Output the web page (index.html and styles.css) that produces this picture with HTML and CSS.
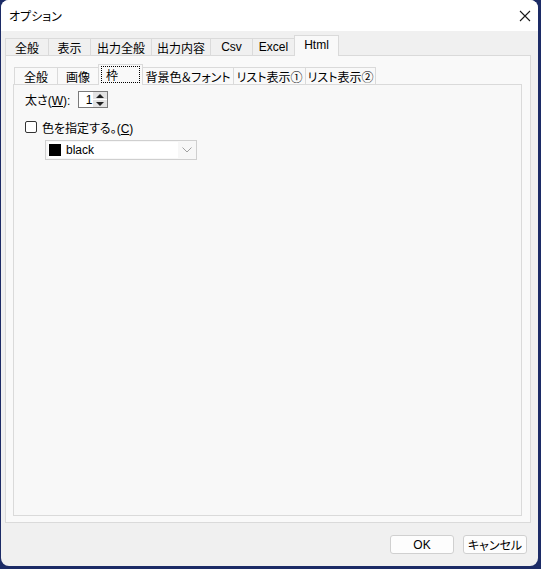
FILE: index.html
```html
<!DOCTYPE html>
<html lang="ja">
<head>
<meta charset="utf-8">
<title>オプション</title>
<link rel="stylesheet" href="styles.css">
</head>
<body>
<div class="window">
  <div class="titlebar">
    <span class="title">オプション</span>
    <svg class="close" width="12" height="12" viewBox="0 0 12 12"><path d="M1 1 L11 11 M11 1 L1 11" stroke="#1a1a1a" stroke-width="1.1" fill="none"/></svg>
  </div>
  <div class="content">
    <div class="tabs outer-tabs">
      <div class="tab w43">全般</div>
      <div class="tab w42">表示</div>
      <div class="tab w61">出力全般</div>
      <div class="tab w59">出力内容</div>
      <div class="tab w42">Csv</div>
      <div class="tab w42">Excel</div>
      <div class="tab active w44">Html</div>
    </div>
    <div class="panel outer-panel">
      <div class="tabs inner-tabs">
        <div class="tab w43">全般</div>
        <div class="tab w41">画像</div>
        <div class="tab active w44"><span class="focus">枠</span></div>
        <div class="tab w91">背景色＆フォント</div>
        <div class="tab w72">リスト表示①</div>
        <div class="tab w70">リスト表示②</div>
      </div>
      <div class="panel inner-panel">
        <div class="row">
          <span class="label">太さ(<u>W</u>):</span>
          <div class="spin">
            <span class="val">1</span>
            <div class="spin-btns">
              <span class="up"></span>
              <span class="down"></span>
            </div>
          </div>
        </div>
        <div class="check">
          <span class="box"></span>
          <span>色を指定する。(<u>C</u>)</span>
        </div>
        <div class="combo">
          <div class="field"><span class="swatch"></span><span>black</span></div>
          <div class="arrow">
            <svg width="10" height="6" viewBox="0 0 10 6"><path d="M0.5 0.5 L5 5 L9.5 0.5" stroke="#a0a0a0" stroke-width="1" fill="none"/></svg>
          </div>
        </div>
      </div>
    </div>
    <div class="buttons">
      <button class="btn">OK</button>
      <button class="btn">キャンセル</button>
    </div>
  </div>
</div>
</body>
</html>
```

FILE: styles.css
```css
html, body {
  margin: 0;
  padding: 0;
}
body {
  background: #1c2b66;
  width: 541px;
  height: 569px;
  overflow: hidden;
  font-family: "Liberation Sans", "Noto Sans CJK JP", sans-serif;
  font-size: 12px;
  color: #000;
  font-feature-settings: "palt";
}
.window {
  margin: 0 3px 3px 1px;
  width: 537px;
  height: 566px;
  background: #f0f0f0;
  border-radius: 8px;
  overflow: hidden;
  display: flex;
  flex-direction: column;
}
.titlebar {
  height: 31px;
  flex: none;
  background: #ffffff;
  display: flex;
  align-items: center;
  justify-content: space-between;
  padding: 0 7px 0 8px;
}
.title {
  font-size: 12px;
}
.close {
  display: block;
}
.content {
  flex: 1;
  display: flex;
  flex-direction: column;
  padding: 4px 7px 0 4px;
}
.tabs {
  display: flex;
  align-items: flex-end;
  height: 20px;
  position: relative;
  z-index: 1;
}
.tab {
  height: 17px;
  box-sizing: border-box;
  border: 1px solid #dadada;
  border-bottom: none;
  margin-left: -1px;
  display: flex;
  align-items: center;
  justify-content: center;
  white-space: nowrap;
  background: #f0f0f0;
}
.tab:first-child {
  margin-left: 0;
}
.tab.active {
  height: 21px;
  margin-bottom: -1px;
  background: #f9f9f9;
  padding-bottom: 2px;
  position: relative;
}
.w41 { width: 42px; }
.w42 { width: 43px; }
.w43 { width: 44px; }
.w44 { width: 45px; }
.w59 { width: 60px; }
.w61 { width: 62px; }
.w70 { width: 71px; }
.w72 { width: 73px; }
.w91 { width: 92px; }
.panel {
  background: #f9f9f9;
  border: 1px solid #dadada;
  box-sizing: border-box;
}
.outer-panel {
  height: 468px;
  padding: 8px 8px 6px 7px;
  display: flex;
  flex-direction: column;
}
.inner-tabs {
  margin-left: 1px;
}
.inner-tabs .tab {
  background: #f9f9f9;
}
.focus {
  border: 1px dotted #000;
  width: 39px;
  height: 17px;
  box-sizing: border-box;
  display: flex;
  align-items: center;
  justify-content: flex-start;
  padding-left: 4px;
}
.inner-panel {
  flex: 1;
  background: #f8f8f8;
  padding: 6px 0 0 11px;
}
.row {
  display: flex;
  align-items: center;
  gap: 8px;
  height: 17px;
}
.label u, .check u {
  text-decoration: underline;
}
.spin {
  width: 30px;
  height: 17px;
  box-sizing: border-box;
  border: 1px solid #7a7a7a;
  background: #fff;
  display: flex;
  justify-content: flex-end;
  align-items: center;
}
.val {
  padding-right: 1px;
  line-height: 14px;
}
.spin-btns {
  width: 14px;
  height: 15px;
  display: flex;
  flex-direction: column;
  gap: 1px;
}
.spin-btns span {
  flex: 1;
  background: #e3e3e3;
  position: relative;
}
.spin-btns .up::after,
.spin-btns .down::after {
  content: "";
  position: absolute;
  left: 3px;
  border-left: 4px solid transparent;
  border-right: 4px solid transparent;
}
.spin-btns .up::after {
  top: 1.5px;
  border-bottom: 4px solid #222;
}
.spin-btns .down::after {
  top: 1.5px;
  border-top: 4px solid #222;
}
.check {
  display: flex;
  align-items: center;
  gap: 5px;
  margin-top: 12px;
  height: 14px;
}
.box {
  width: 12px;
  height: 12px;
  box-sizing: border-box;
  border: 1px solid #333;
  border-radius: 2px;
  background: #fff;
}
.combo {
  margin: 6px 0 0 20px;
  width: 152px;
  height: 20px;
  box-sizing: border-box;
  border: 1px solid #cfcfcf;
  background: #f7f7f7;
  display: flex;
  align-items: center;
}
.field {
  margin-left: 2px;
  width: 129px;
  height: 16px;
  background: #fff;
  display: flex;
  align-items: center;
  gap: 5px;
  padding-left: 1px;
}
.swatch {
  width: 12px;
  height: 12px;
  background: #000;
}
.arrow {
  flex: 1;
  display: flex;
  justify-content: center;
  align-items: center;
}
.arrow svg {
  display: block;
}
.buttons {
  display: flex;
  justify-content: flex-end;
  gap: 9px;
  margin-top: 12px;
  padding-right: 4px;
}
.btn {
  width: 64px;
  height: 19px;
  box-sizing: border-box;
  border: 1px solid #d0d0d0;
  border-radius: 3px;
  background: #fdfdfd;
  font-family: "Liberation Sans", "Noto Sans CJK JP", sans-serif;
  font-size: 12px;
  padding: 0;
  color: #000;
  font-feature-settings: "palt";
}
```
